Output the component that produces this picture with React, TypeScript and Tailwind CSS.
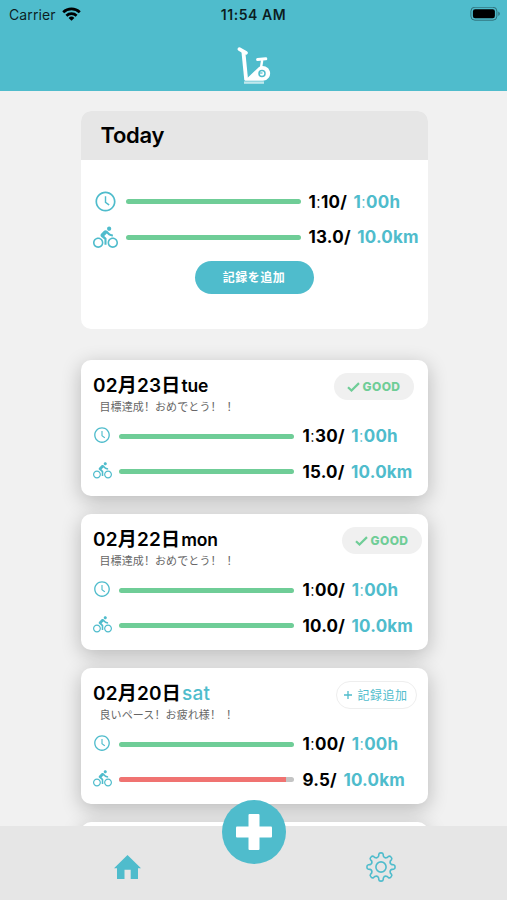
import { AiOutlineClockCircle } from "react-icons/ai";
import { MdDirectionsBike } from "react-icons/md";
import clsx from "clsx";

interface Goal {
  time: [string, string];
  distance: string;
  progress: number;
}

interface RecordItem extends Goal {
  date: string;
  day: string;
  message: string;
  good: boolean;
  badgeClass: string;
}

const today: Goal = { time: ["1", "10"], distance: "13.0", progress: 100 };

const records: RecordItem[] = [
  {
    date: "02月23日",
    day: "tue",
    message: "目標達成！おめでとう！！",
    time: ["1", "30"],
    distance: "15.0",
    progress: 100,
    good: true,
    badgeClass: "mr-[14px]",
  },
  {
    date: "02月22日",
    day: "mon",
    message: "目標達成！おめでとう！！",
    time: ["1", "00"],
    distance: "10.0",
    progress: 100,
    good: true,
    badgeClass: "mr-[6px]",
  },
  {
    date: "02月20日",
    day: "sat",
    message: "良いペース！お疲れ様！！",
    time: ["1", "00"],
    distance: "9.5",
    progress: 95.5,
    good: false,
    badgeClass: "mr-[11px]",
  },
];

// eight-toothed outline, one tooth every 45 degrees
function gearPath() {
  const at = (r: number, deg: number) => {
    const a = (deg * Math.PI) / 180;
    return `${(15 + r * Math.sin(a)).toFixed(2)} ${(15 - r * Math.cos(a)).toFixed(2)}`;
  };
  let d = `M${at(11.2, -12)}`;
  for (let t = 0; t < 360; t += 45) {
    d += `L${at(12.8, t - 10)}Q${at(14.3, t - 8)} ${at(14.1, t)}`;
    d += `Q${at(14.3, t + 8)} ${at(12.8, t + 10)}L${at(11.2, t + 12)}`;
    d += `Q${at(9, t + 22.5)} ${at(11.2, t + 33)}`;
  }
  return d + "Z";
}

function StatusBar() {
  return (
    <div className="grid h-7 grid-cols-3 items-center pl-[9px] pr-[6px] text-black/85">
      <div className="flex items-center gap-[6px] text-[14px] tracking-[0.1px]">
        Carrier
        <svg width="19" height="14" viewBox="0 0 19 14" fill="none" stroke="#000" strokeWidth="2.7">
          <path d="M1.2 5.2a12 12 0 0 1 16.6 0" />
          <path d="M4.4 8.7a7.4 7.4 0 0 1 10.2 0" />
          <path d="M9.5 13.8 6.6 10.9a4.2 4.2 0 0 1 5.8 0z" fill="#000" stroke="none" />
        </svg>
      </div>
      <div className="-ml-[3px] text-center text-[14px] font-semibold tracking-[0.55px] whitespace-nowrap">
        11:54 AM
      </div>
      <svg className="justify-self-end" width="31" height="15" viewBox="0 0 31 15">
        <rect x="0.9" y="0.2" width="26" height="13" rx="4" fill="none" stroke="#000" strokeOpacity="0.4" />
        <rect x="2.9" y="2.2" width="22" height="9" rx="2.2" fill="#000" />
        <path d="M28.4 4.5v4.4c1.8-.8 1.8-3.6 0-4.4z" fill="#000" fillOpacity="0.45" />
      </svg>
    </div>
  );
}

function BikeLogo() {
  return (
    <svg width="36" height="42" viewBox="0 0 36 42" fill="none" stroke="#fff">
      <path d="M2.4 3.2 9 6.8" strokeWidth="3.6" strokeLinecap="round" />
      <path d="M6.3 5 9.2 34" strokeWidth="3.8" />
      <path d="M20.6 13.6 28.8 12.8" strokeWidth="3" strokeLinecap="round" />
      <path d="M25.2 14 23.8 23" strokeWidth="2.4" />
      <path d="M7.5 34.8 22 21a7.4 7.4 0 1 1 4 13.8z" fill="#fff" stroke="none" />
      <circle cx="25" cy="27.4" r="3" stroke="#4fbccc" strokeWidth="1.5" />
      <path d="M22 27h3.5" stroke="#4fbccc" strokeWidth="1.2" />
      <path d="M7 36.6h20" strokeWidth="2.4" strokeOpacity="0.65" />
    </svg>
  );
}

function Bar({ progress }: { progress: number }) {
  return (
    <div className="h-[5px] w-[175px] overflow-hidden rounded-full bg-[#c4c4c4]">
      <div
        className={clsx("h-full", progress < 100 ? "bg-[#f07371]" : "bg-[#6fcd97]")}
        style={{ width: `${progress}%` }}
      />
    </div>
  );
}

function GoalRows({ goal, large = false }: { goal: Goal; large?: boolean }) {
  const row = "flex items-center text-[17px] leading-6 font-bold tracking-[0.2px] whitespace-nowrap";
  const icon = clsx(
    "flex shrink-0 justify-center text-[#4fbccc]",
    large ? "mr-1 w-[33px]" : "mr-[7px] w-[19px] pb-0.5"
  );
  return (
    <>
      <div className={clsx(row, large ? "h-[35px]" : "h-9")}>
        <span className={icon}>
          <AiOutlineClockCircle size={large ? 23 : 18} />
        </span>
        <Bar progress={100} />
        <span className={large ? "ml-2" : "ml-[9px]"}>
          {goal.time[0]}
          <span className="font-light">:</span>
          {goal.time[1]}/
        </span>
        <span className="ml-[6.5px] text-[#4fbccc]">
          1<span className="font-light">:</span>00h
        </span>
      </div>
      <div className={clsx(row, large ? "h-9" : "h-[35px]")}>
        <span className={icon}>
          <MdDirectionsBike size={large ? 25 : 19} />
        </span>
        <Bar progress={goal.progress} />
        <span className={large ? "ml-2" : "ml-[9px]"}>{goal.distance}/</span>
        <span className="ml-[6.5px] text-[#4fbccc]">10.0km</span>
      </div>
    </>
  );
}

function RecordCard({ item }: { item: RecordItem }) {
  return (
    <div className="h-[136px] shrink-0 rounded-[10px] bg-white pt-[13px] pl-3 shadow-[0_5px_20px_rgba(0,0,0,0.24)]">
      <div className="flex h-[45px] items-start justify-between">
        <div>
          <div className="flex h-[26px] items-center pl-[0.5px] text-[19px] font-semibold tracking-[0.2px]">
            {item.date}
            {item.day === "sat" ? (
              <span className="pl-px text-[19px] font-medium tracking-[0.2px] text-[#4fbccc]">{item.day}</span>
            ) : (
              <span className="pl-px text-[17.5px] tracking-[-0.2px]">{item.day}</span>
            )}
          </div>
          <p className="flex h-4 pl-[7px] text-[11px] leading-4 tracking-[0.1px] text-[#666]">
            <span>{item.message.slice(0, -1)}</span>
            <span className="ml-[5px]">{item.message.slice(-1)}</span>
          </p>
        </div>
        {item.good ? (
          <div
            className={clsx(
              "flex h-[27px] w-20 items-center justify-center gap-[3px] rounded-full bg-[#f0f0f0] pt-px text-[12px] font-extrabold tracking-[0.4px] text-[#6fcd97]",
              item.badgeClass
            )}
          >
            <svg width="13" height="10" viewBox="0 0 13 10" fill="none" stroke="currentColor" strokeWidth="2.2">
              <path d="M1 5.2 4.5 8.5 12 1.1" />
            </svg>
            GOOD
          </div>
        ) : (
          <div
            className={clsx(
              "flex h-7 w-[81px] items-center justify-center gap-[5px] rounded-full border border-[#eee] text-[12px] text-[#4fbccc]",
              item.badgeClass
            )}
          >
            <svg width="8" height="8" viewBox="0 0 8 8" stroke="currentColor" strokeWidth="1.3">
              <path d="M4 0v8M0 4h8" />
            </svg>
            <span className="pt-px tracking-[0.5px]">記録追加</span>
          </div>
        )}
      </div>
      <GoalRows goal={item} />
    </div>
  );
}

export default function App() {
  return (
    <div className="flex h-[900px] w-[507px] flex-col overflow-hidden bg-[#f1f1f1] font-['Inter','Noto_Sans_CJK_SC',sans-serif] text-black">
      <header className="h-[91px] shrink-0 bg-[#4fbccc]">
        <StatusBar />
        <div className="mt-[18px] flex justify-center pl-[3px]">
          <BikeLogo />
        </div>
      </header>

      <main className="flex min-h-0 flex-1 flex-col overflow-hidden pt-5 pl-[80.5px]">
        {/* today */}
        <section className="h-[218px] w-[347px] shrink-0 overflow-hidden rounded-[10px] bg-white">
          <h1 className="flex h-[49px] items-center bg-[#e6e6e6] pl-5 text-[22px] font-semibold tracking-[-0.3px]">
            Today
          </h1>
          <div className="pt-6 pl-2">
            <GoalRows goal={today} large />
          </div>
          <button className="mx-auto mt-[6px] block h-[33px] w-[119px] rounded-full bg-[#4fbccc] text-[12px] font-bold tracking-[0.5px] text-white">
            記録を追加
          </button>
        </section>

        {/* history */}
        <section className="mt-[31px] flex w-[347px] flex-col gap-[18px]">
          {records.map((item) => (
            <RecordCard key={item.date} item={item} />
          ))}
          <div className="h-[136px] shrink-0 rounded-[10px] bg-white shadow-[0_5px_20px_rgba(0,0,0,0.24)]" />
        </section>
      </main>

      {/* tab bar */}
      <nav className="relative flex h-[74px] shrink-0 items-center justify-around bg-[#e6e6e6] pt-[7px] pl-[2px] text-[#4fbccc]">
        <svg width="27" height="24" viewBox="0 0 27 24" fill="currentColor">
          <path d="M13.5 0 27 13.2h-3V24h-7.3v-9.2h-6.2V24H3V13.2H0z" />
        </svg>
        <svg className="-mr-px" width="30" height="30" viewBox="0 0 30 30" fill="none" stroke="currentColor" strokeWidth="1.6" strokeLinejoin="round">
          <path d={gearPath()} />
          <circle cx="15" cy="15" r="5.1" />
        </svg>
        <button className="absolute -top-[26px] left-[222px] flex h-16 w-16 items-center justify-center rounded-full bg-[#4fbccc]">
          <svg width="36" height="36" viewBox="0 0 36 36" fill="#fff">
            <rect x="12.5" width="11" height="36" rx="1" />
            <rect y="12.5" width="36" height="11" rx="1" />
          </svg>
        </button>
      </nav>
    </div>
  );
}
